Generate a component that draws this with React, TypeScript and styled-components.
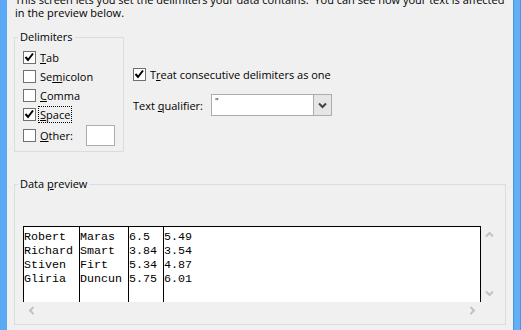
import React from "react";
import styled, { createGlobalStyle } from "styled-components";

const GlobalStyle = createGlobalStyle`
  html, body {
    margin: 0;
    padding: 0;
    background: #f0f0f0;
  }
  body {
    font-family: "Open Sans", "Noto Sans", sans-serif;
    font-size: 11px;
    color: #000;
  }
`;

const Window = styled.div`
  display: flex;
  width: 521px;
  height: 330px;
  overflow: hidden;
  background: #f0f0f0;
`;

const LeftEdge = styled.div`
  flex: none;
  width: 7px;
  background: #5ba9f5;
`;

const RightEdge = styled.div`
  flex: none;
  width: 6px;
  background: #62aef7;
  border-left: 1px solid #4d94da;
  border-right: 1px solid #4d94da;
`;

const Page = styled.div`
  flex: 1;
  min-width: 0;
  padding: 0 7px;
  display: flex;
  flex-direction: column;
`;

const Intro = styled.div`
  margin-top: -7px;
  padding-left: 1px;
  line-height: 13px;
  white-space: pre;
`;

const TopRow = styled.div`
  display: flex;
  align-items: flex-start;
  gap: 9px;
  margin-top: 11px;
`;

const Group = styled.fieldset<{ $width?: number }>`
  margin: 0;
  min-width: 0;
  box-sizing: border-box;
  border: 1px solid #dcdcdc;
  padding: 0 8px 4px 8px;
  ${(p) => (p.$width ? `width: ${p.$width}px;` : "")}
`;

const Caption = styled.legend`
  margin-left: -5px;
  padding: 0 2px;
  line-height: 14px;
`;

const OptionList = styled.div`
  display: flex;
  flex-direction: column;
  margin-top: 4px;
`;

const Option = styled.div<{ $height?: number }>`
  display: flex;
  align-items: center;
  gap: 4px;
  height: ${(p) => p.$height ?? 19}px;
  white-space: nowrap;
`;

const Box = styled.span`
  flex: none;
  width: 13px;
  height: 13px;
  box-sizing: border-box;
  border: 1px solid #707070;
  background: #fff;
  display: flex;
  align-items: center;
  justify-content: center;
`;

const OptionLabel = styled.span<{ $focused?: boolean }>`
  line-height: 15px;
  ${(p) =>
    p.$focused
      ? `outline: 1px dotted #000; outline-offset: 0; padding: 0 1px; margin-left: -1px;`
      : ""}
`;

const SmallInput = styled.span`
  margin-left: auto;
  width: 29px;
  height: 21px;
  box-sizing: border-box;
  border: 1px solid #abadb3;
  background: #fff;
`;

const Side = styled.div`
  display: flex;
  flex-direction: column;
  gap: 10px;
  margin-top: 35px;
`;

const FieldRow = styled.div`
  display: flex;
  align-items: center;
  height: 22px;
`;

const FieldLabel = styled.span`
  width: 78px;
  white-space: nowrap;
`;

const Combo = styled.div`
  display: flex;
  width: 121px;
  height: 22px;
  box-sizing: border-box;
  border: 1px solid #acacac;
  background: #fff;
`;

const ComboText = styled.span`
  flex: 1;
  padding-left: 3px;
  line-height: 14px;
  font-size: 9px;
`;

const ComboButton = styled.span`
  flex: none;
  width: 17px;
  border-left: 1px solid #acacac;
  background: #e6e6e6;
  display: flex;
  align-items: center;
  justify-content: center;
`;

const PreviewGroup = styled(Group)`
  margin-top: 25px;
  padding: 0 7px 5px 8px;
`;

const Preview = styled.div`
  display: grid;
  grid-template-columns: 1fr 17px;
  grid-template-rows: 76px 17px;
  margin-top: 35px;
`;

const Sheet = styled.div`
  display: flex;
  box-sizing: border-box;
  border: 1px solid #000;
  border-bottom: none;
  background: #fff;
  overflow: hidden;
`;

const Column = styled.div<{ $width?: number; $last?: boolean }>`
  flex: ${(p) => (p.$width ? `none` : `1`)};
  ${(p) => (p.$width ? `width: ${p.$width}px;` : "")}
  border-right: ${(p) => (p.$last ? "none" : "1px solid #000")};
  padding-top: 3px;
  font-family: "Liberation Mono", "Courier New", monospace;
  font-size: 11.67px;
  line-height: 14px;
  color: #000;
  white-space: pre;
`;

const ScrollTrack = styled.div<{ $vertical?: boolean }>`
  display: flex;
  flex-direction: ${(p) => (p.$vertical ? "column" : "row")};
  justify-content: space-between;
  background: #f0f0f0;
`;

const ScrollButton = styled.span`
  width: 17px;
  height: 17px;
  display: flex;
  align-items: center;
  justify-content: center;
`;

function Check() {
  return (
    <svg width="11" height="11" viewBox="0 0 11 11">
      <polyline points="1.5,5 4,8 9,1.5" fill="none" stroke="#000" strokeWidth="2" />
    </svg>
  );
}

function CheckBox({ checked }: { checked?: boolean }) {
  return <Box>{checked && <Check />}</Box>;
}

function Chevron({ dir, color }: { dir: "up" | "down" | "left" | "right"; color: string }) {
  const rot = { down: 0, up: 180, left: 90, right: -90 }[dir];
  return (
    <svg width="9" height="9" viewBox="0 0 9 9" style={{ transform: `rotate(${rot}deg)` }}>
      <polyline points="1,2.5 4.5,6 8,2.5" fill="none" stroke={color} strokeWidth="2" />
    </svg>
  );
}

const rows = [
  ["Robert", "Maras", "6.5", "5.49"],
  ["Richard", "Smart", "3.84", "3.54"],
  ["Stiven", "Firt", "5.34", "4.87"],
  ["Gliria", "Duncun", "5.75", "6.01"],
];

const widths = [56, 49, 35];

export default function App() {
  return (
    <>
      <GlobalStyle />
      <Window>
        <LeftEdge />
        <Page>
          <Intro>
            {"This screen lets you set the delimiters your data contains.  You can see how your text is affected\nin the preview below."}
          </Intro>

          <TopRow>
            <Group $width={110}>
              <Caption>Delimiters</Caption>
              <OptionList>
                <Option>
                  <CheckBox checked />
                  <OptionLabel><u>T</u>ab</OptionLabel>
                </Option>
                <Option>
                  <CheckBox />
                  <OptionLabel>Se<u>m</u>icolon</OptionLabel>
                </Option>
                <Option>
                  <CheckBox />
                  <OptionLabel><u>C</u>omma</OptionLabel>
                </Option>
                <Option>
                  <CheckBox checked />
                  <OptionLabel $focused><u>S</u>pace</OptionLabel>
                </Option>
                <Option $height={23}>
                  <CheckBox />
                  <OptionLabel><u>O</u>ther:</OptionLabel>
                  <SmallInput />
                </Option>
              </OptionList>
            </Group>

            <Side>
              <Option>
                <CheckBox checked />
                <OptionLabel>T<u>r</u>eat consecutive delimiters as one</OptionLabel>
              </Option>
              <FieldRow>
                <FieldLabel>Text <u>q</u>ualifier:</FieldLabel>
                <Combo>
                  <ComboText>"</ComboText>
                  <ComboButton>
                    <Chevron dir="down" color="#444" />
                  </ComboButton>
                </Combo>
              </FieldRow>
            </Side>
          </TopRow>

          <PreviewGroup>
            <Caption>Data <u>p</u>review</Caption>
            <Preview>
              <Sheet>
                {[0, 1, 2, 3].map((c) => (
                  <Column key={c} $width={widths[c] ? widths[c] - 1 : undefined} $last={c === 3}>
                    {rows.map((r) => r[c]).join("\n")}
                  </Column>
                ))}
              </Sheet>
              <ScrollTrack $vertical>
                <ScrollButton><Chevron dir="up" color="#c2c2c2" /></ScrollButton>
                <ScrollButton><Chevron dir="down" color="#c2c2c2" /></ScrollButton>
              </ScrollTrack>
              <ScrollTrack>
                <ScrollButton><Chevron dir="left" color="#c2c2c2" /></ScrollButton>
                <ScrollButton><Chevron dir="right" color="#c2c2c2" /></ScrollButton>
              </ScrollTrack>
              <ScrollTrack />
            </Preview>
          </PreviewGroup>
        </Page>
        <RightEdge />
      </Window>
    </>
  );
}
